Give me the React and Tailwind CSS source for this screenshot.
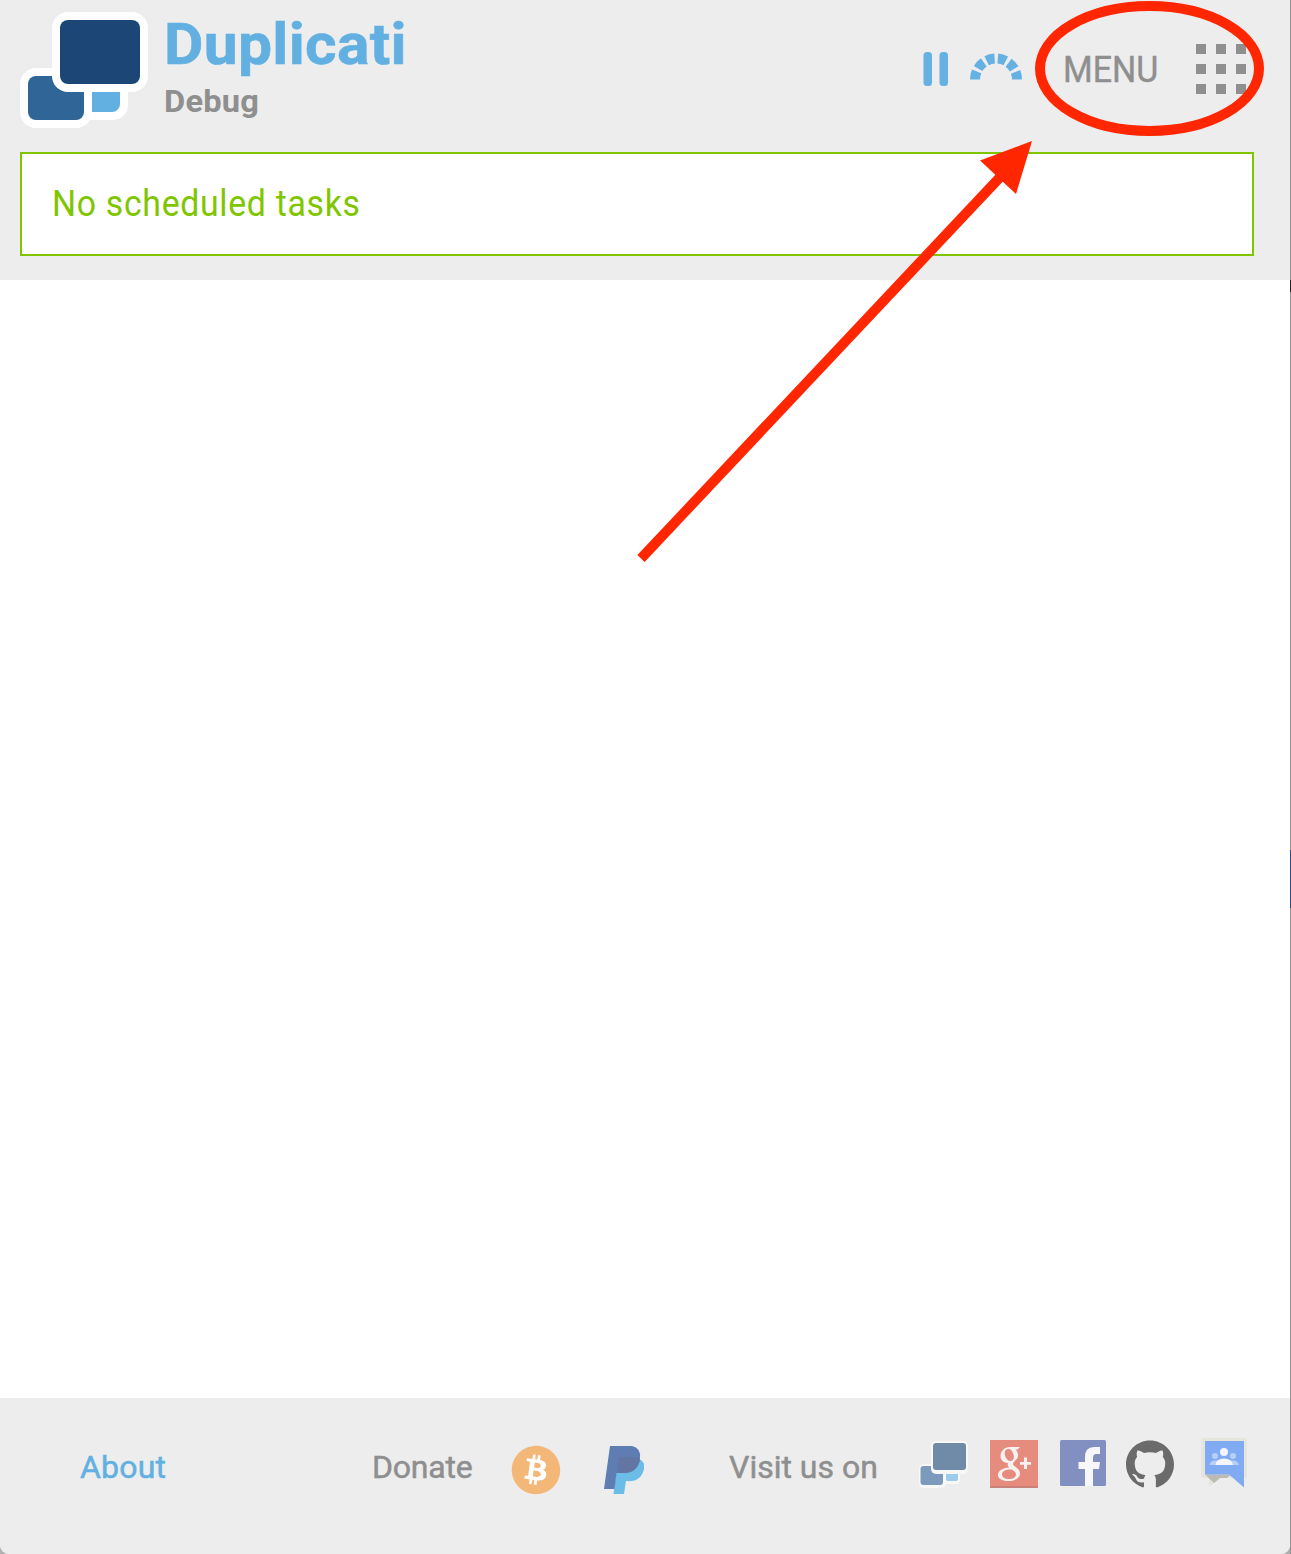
import React from "react";
import { FaBitcoin } from "react-icons/fa";
import { SiGithub } from "react-icons/si";

function Logo() {
  return (
    <svg className="h-[116px] w-[128px]" viewBox="0 0 128 116">
      <rect x="48" y="48" width="60" height="60" rx="15" fill="#fff" />
      <rect x="56" y="56" width="44" height="44" rx="8" fill="#62b0e1" />
      <rect x="0" y="56" width="72" height="60" rx="16" fill="#fff" />
      <rect x="8" y="64" width="56" height="44" rx="8" fill="#306598" />
      <rect x="32" y="0" width="96" height="80" rx="16" fill="#fff" />
      <rect x="40" y="8" width="80" height="64" rx="8" fill="#1b4675" />
    </svg>
  );
}

function PauseIcon() {
  return (
    <svg className="h-[34px] w-[26px]" viewBox="0 0 26 34" fill="#65b1e2">
      <rect x="1.500" y="0" width="8.500" height="34" rx="3.500" />
      <rect x="17.500" y="0" width="8.500" height="34" rx="3.500" />
    </svg>
  );
}

function ThrottleIcon() {
  return (
    <svg className="mb-[5px] h-[27px] w-[52px]" viewBox="0 0 52 27">
      <path d="M5 26.500A21 21 0 0 1 47 26.500" fill="none" stroke="#65b1e2" strokeWidth="10" strokeDasharray="8.250 3.300" />
    </svg>
  );
}

function GridIcon() {
  return (
    <div className="grid grid-cols-[10px_10px_10px] gap-[10px]">
      {Array.from({ length: 9 }, (_, i) => (
        <span key={i} className="size-[10px] bg-[#8f8f8f]" />
      ))}
    </div>
  );
}

function PaypalIcon() {
  return (
    <svg className="h-12 w-[41px]" viewBox="0 0 41 48">
      <path d="M14 13H35Q41 15 40 23C38 32 32 36 22 35L20 48H9.500Z" fill="#6bbde7" />
      <path d="M6 0H28Q37 2 36 12C35 22 28 27 20 27H12.500L10.500 43H0Z" fill="#5e7db3" />
      <path d="M15 11H33Q36 12 36 14C34 23 28 27 20 27H12.500Z" fill="#6375a3" />
    </svg>
  );
}

function DuplicatiSmall() {
  return (
    <svg className="h-12 w-[50px]" viewBox="0 0 50 48">
      <rect x="25" y="29" width="16" height="15" rx="4" fill="#f8f8f8" />
      <rect x="27" y="31" width="12" height="10" rx="2" fill="#9acbea" />
      <rect x="0" y="24" width="27" height="24" rx="5" fill="#f8f8f8" />
      <rect x="1.500" y="26" width="22.500" height="19" rx="3" fill="#7c9bbc" />
      <rect x="12" y="1" width="37" height="33" rx="5" fill="#f8f8f8" />
      <rect x="14" y="3" width="33" height="27" rx="3" fill="#6f8ba8" />
    </svg>
  );
}

function GooglePlusIcon() {
  return (
    <svg className="size-12" viewBox="0 0 48 48">
      <path d="M0 0H48V48H0Z" fill="#e68c7f" />
      <path d="M0 46H48V48H0Z" fill="#c98278" />
      <g fill="#f9f1f0" fillRule="evenodd">
        <path d="M20 7H30L27.500 9.500H25.500Q28.500 12 28 16C27.500 20 23 21.500 23 24C23 26.500 30 28 30 33.500C30 38 25 41 18 41C12 41 8 38.500 8 35C8 30.500 13 28 19 27.500Q17 25.500 18 23C13.500 23 10.500 20 10.500 16C10.500 11 14.500 7 20 7ZM18.500 9C15.500 9 14 11.500 15 15.500C16 19 18 21 20.500 21C23.500 21 24.500 18 23.500 14.500C22.500 11 21 9 18.500 9ZM20.500 29.500C15 29.500 12 31.500 12 34.500C12 37 14.500 39 19 39C23.500 39 26 37.200 26 34.500C26 32.500 24 31 22 29.500Z" />
        <path d="M34 17.500H37V22H41V24.800H37V29H34V24.800H30V22H34Z" />
      </g>
    </svg>
  );
}

function FacebookIcon() {
  return (
    <svg className="h-[46px] w-[46px]" viewBox="0 0 46 46">
      <rect width="46" height="46" rx="1.500" fill="#8190c0" />
      <path d="M25 46V29H18.500V22H25V17Q25 7 34 7H40V14H36Q33 14 33 18V22H40L39 29H33V46Z" fill="#f7f7f9" />
    </svg>
  );
}

function GroupsIcon() {
  return (
    <svg className="h-[50px] w-[46px]" viewBox="0 0 46 50">
      <path d="M2 0H44Q46 0 46 2V38Q46 40 44 40H20L8 49V40H2Q0 40 0 38V2Q0 0 2 0Z" fill="#e6e5dc" />
      <path d="M4 36.500H30L26 40H19L13 45Z" fill="#babbb3" />
      <path d="M4 3H43V49.500L28 36.500H4Z" fill="#80aaf1" />
      <g fill="#b8d0f8">
        <circle cx="14" cy="18" r="3" />
        <circle cx="32" cy="18" r="3" />
        <path d="M8.500 27Q9 22.500 14 22.500H32Q37 22.500 38 27Z" />
      </g>
      <circle cx="23" cy="14" r="4" fill="#f3f5f9" />
      <path d="M14.500 27Q15 20.500 23 20.500T32 27Z" fill="#f3f5f9" />
    </svg>
  );
}

function Annotation() {
  return (
    <svg className="pointer-events-none absolute top-0 left-0 h-[600px] w-[1291px]" viewBox="0 0 1291 600">
      <ellipse cx="1149.500" cy="68.500" rx="109.500" ry="62.500" fill="none" stroke="#ff2600" strokeWidth="10" />
      <path d="M641 558.500L1004 173" stroke="#ff2600" strokeWidth="10" />
      <path d="M1032 141L980 160.500L1016 194Z" fill="#ff2600" />
    </svg>
  );
}

export default function App() {
  return (
    <div className="relative flex h-[1554px] w-[1291px] overflow-hidden bg-[#b0b0b0] font-[Roboto,sans-serif] whitespace-nowrap text-[#8f8f8f]">
      <div className="flex w-[1290px] flex-col overflow-hidden rounded-b-[9px] bg-white">
        <header className="h-[280px] bg-[#ededed] pt-3 pl-5">
          <div className="flex h-[140px]">
            <Logo />
            <div className="w-[758px] pl-4">
              <h1 className="h-[62px] origin-left scale-x-[1.045] text-[58px] leading-[64px] font-bold tracking-[0.3px] text-[#62b0e1] [-webkit-text-stroke:0.6px]">Duplicati</h1>
              <h2 className="origin-left scale-x-[1.02] pt-[7px] text-[32px] leading-[40px] font-bold tracking-[0.2px]">Debug</h2>
            </div>
            <div className="flex h-[114px] items-center pl-4">
              <PauseIcon />
              <div className="ml-[22px]"><ThrottleIcon /></div>
              <div className="ml-[41px] w-[133px] pt-px">
                <span className="inline-block origin-left scale-x-[0.945] text-[36px] [-webkit-text-stroke:0.4px]">MENU</span>
              </div>
              <GridIcon />
            </div>
          </div>
          <section className="flex h-[104px] w-[1234px] items-center border-2 border-[#7fc600] bg-white pl-[30px] text-[36px] tracking-[0.75px] text-[#7fc600]">
            <span className="origin-left scale-x-[0.938]">No scheduled tasks</span>
          </section>
        </header>
        <main className="flex-1" />
        <footer className="flex h-[156px] bg-[#ededed] pt-[42px] text-[32px]">
          <a className="ml-20 w-[292px] leading-[54px] tracking-[0.2px] text-[#62b0e1] [-webkit-text-stroke:0.5px]">About</a>
          <span className="w-[140px] leading-[54px] tracking-[-0.2px] [-webkit-text-stroke:0.5px]">Donate</span>
          <div className="mt-[6px] flex size-12 items-center justify-center rounded-full bg-[radial-gradient(circle,#fff_60%,transparent_61%)]">
            <FaBitcoin className="size-[50px] shrink-0 -rotate-6 text-[#f3b777]" />
          </div>
          <div className="mt-[6px] ml-11 w-[125px]"><PaypalIcon /></div>
          <span className="w-[190px] leading-[54px] [-webkit-text-stroke:0.5px]">Visit us on</span>
          <div className="flex items-start">
            <DuplicatiSmall />
            <div className="ml-[21px]"><GooglePlusIcon /></div>
            <div className="ml-[22px]"><FacebookIcon /></div>
            <SiGithub className="ml-5 size-12 text-[#6b6b6b]" />
            <div className="-mt-[2px] ml-[27px]"><GroupsIcon /></div>
          </div>
        </footer>
      </div>
      <div className="flex w-px flex-col bg-[#929292]">
        <div className="mt-[280px] h-3 bg-[#222]" />
        <div className="mt-[558px] h-[58px] bg-[#284c84]" />
      </div>
      <Annotation />
    </div>
  );
}
